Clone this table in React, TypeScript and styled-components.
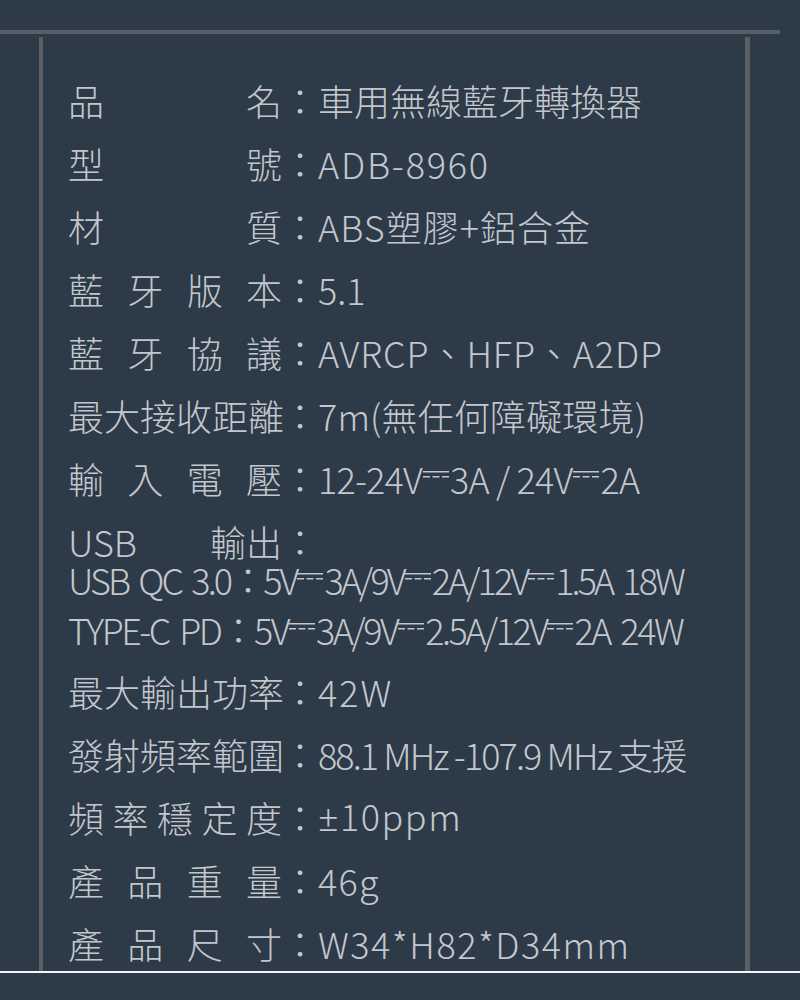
import styled, { createGlobalStyle } from 'styled-components'

const GlobalStyle = createGlobalStyle`
  html, body {
    margin: 0;
    padding: 0;
    background: #2d3a48;
  }
  body {
    width: 800px;
    height: 1000px;
    overflow: hidden;
    font-family: "Noto Sans CJK TC", "Noto Sans", sans-serif;
    font-weight: 300;
    color: #c3c7cd;
  }
`

const Page = styled.div`
  width: 800px;
  height: 1000px;
  background: #2d3a48;
  padding-top: 30px;
  box-sizing: border-box;
`

const TopRule = styled.div`
  width: 780px;
  height: 4px;
  background: #5b5e63;
`

const Frame = styled.div`
  margin: 3px 0 0 39px;
  width: 711px;
  height: 934px;
  box-sizing: border-box;
  border-left: 4px solid #5b5e63;
  border-right: 5px solid #5b5e63;
  padding: 31px 0 0 25px;
`

const BottomRule = styled.div`
  width: 800px;
  height: 2px;
  background: #f4f5f6;
`

const Row = styled.div<{ $h?: number; $top?: number }>`
  display: flex;
  align-items: center;
  height: ${(p) => p.$h ?? 63}px;
  margin-top: ${(p) => p.$top ?? 0}px;
  font-size: 36px;
  white-space: nowrap;
`

const Label = styled.span`
  display: inline-block;
  width: 214px;
  text-align: justify;
  text-align-last: justify;
  line-height: 1;
`

const SplitLabel = styled.span`
  display: inline-flex;
  justify-content: space-between;
  width: 214px;
  line-height: 1;
`

const Colon = styled.span`
  display: inline-block;
  width: 36px;
  text-align: center;
  line-height: 1;
`

const Value = styled.span<{ $ls?: number }>`
  line-height: 1;
  letter-spacing: ${(p) => p.$ls ?? 0}px;
`

const Latin = styled.span`
  font-family: "Noto Sans", sans-serif;
`

const SubLine = styled.span<{ $ls?: number }>`
  line-height: 1;
  letter-spacing: ${(p) => p.$ls ?? -2.9}px;
  word-spacing: 5px;
`

const DcMark = () => (
  <svg
    width="26"
    height="7"
    viewBox="0 0 26 7"
    style={{ verticalAlign: '0.42em', margin: '0 1px' }}
  >
    <rect x="0" y="0" width="26" height="1.5" fill="#c3c7cd" />
    <rect x="0" y="5" width="7" height="1.5" fill="#c3c7cd" />
    <rect x="9.5" y="5" width="7" height="1.5" fill="#c3c7cd" />
    <rect x="19" y="5" width="7" height="1.5" fill="#c3c7cd" />
  </svg>
)

type Spec = { label: string; value: React.ReactNode; ls?: number }

const top: Spec[] = [
  { label: '品名', value: '車用無線藍牙轉換器' },
  { label: '型號', value: 'ADB-8960', ls: 1.8 },
  { label: '材質', value: 'ABS塑膠+鋁合金', ls: 1 },
  { label: '藍 牙 版 本', value: '5.1', ls: 0 },
  { label: '藍 牙 協 議', value: 'AVRCP、HFP、A2DP', ls: 0.9 },
  { label: '最大接收距離', value: '7m(無任何障礙環境)', ls: 0.15 },
  {
    label: '輸 入 電 壓',
    value: (
      <>
        12-24V<DcMark />3A / 24V<DcMark />2A
      </>
    ),
    ls: -0.8,
  },
]

const bottom: Spec[] = [
  { label: '最大輸出功率', value: '42W', ls: 2 },
  { label: '發射頻率範圍', value: '88.1 MHz -107.9 MHz 支援', ls: -1.9 },
  {
    label: '頻 率 穩 定 度',
    value: (
      <>
        <Latin>±</Latin>10ppm
      </>
    ),
    ls: 1.5,
  },
  { label: '產 品 重 量', value: '46g', ls: 1.2 },
  { label: '產 品 尺 寸', value: 'W34*H82*D34mm', ls: 1.5 },
]

const SpecRow = ({ label, value, ls }: Spec) => (
  <Row>
    <Label>{label}</Label>
    <Colon>：</Colon>
    <Value $ls={ls}>{value}</Value>
  </Row>
)

export default function App() {
  return (
    <Page>
      <GlobalStyle />
      <TopRule />
      <Frame>
        {top.map((s) => (
          <SpecRow key={s.label} {...s} />
        ))}
        <Row $h={36} $top={14}>
          <SplitLabel>
            <span>USB</span>
            <span>輸出</span>
          </SplitLabel>
          <Colon>：</Colon>
        </Row>
        <Row $h={40}>
          <SubLine>
            USB QC 3.0：5V<DcMark />3A/9V<DcMark />2A/12V<DcMark />1.5A 18W
          </SubLine>
        </Row>
        <Row $h={60}>
          <SubLine $ls={-2.5}>
            TYPE-C PD：5V<DcMark />3A/9V<DcMark />2.5A/12V<DcMark />2A 24W
          </SubLine>
        </Row>
        {bottom.map((s) => (
          <SpecRow key={s.label} {...s} />
        ))}
      </Frame>
      <BottomRule />
    </Page>
  )
}
